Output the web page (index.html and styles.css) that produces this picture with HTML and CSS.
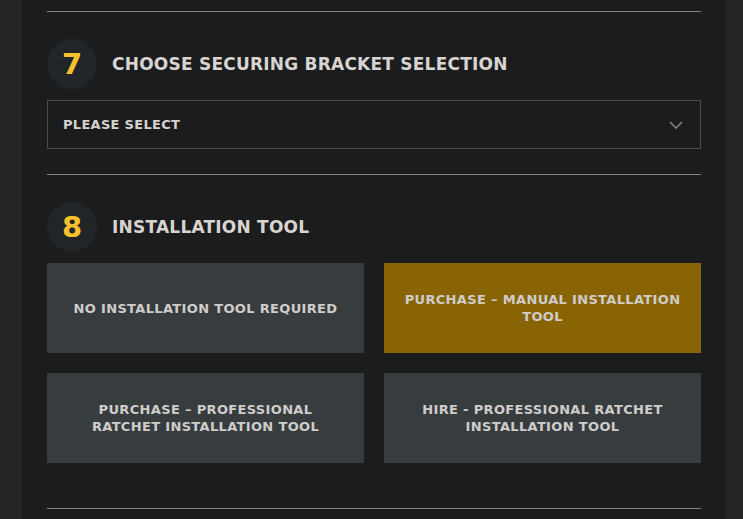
FILE: index.html
```html
<!DOCTYPE html>
<html lang="en">
<head>
<meta charset="utf-8">
<title>Configurator</title>
<link rel="stylesheet" href="styles.css">
</head>
<body>
<div class="page">
  <div class="panel">
    <div class="rule"></div>
    <section class="step">
      <div class="step-head">
        <span class="step-num">7</span>
        <h2 class="step-title">CHOOSE SECURING BRACKET SELECTION</h2>
      </div>
      <div class="select">
        <span class="select-label">PLEASE SELECT</span>
        <svg class="chevron" width="14" height="8" viewBox="0 0 14 8"><path d="M1 1 L7 7 L13 1" fill="none" stroke="#8d8273" stroke-width="1.6"/></svg>
      </div>
    </section>
    <div class="rule"></div>
    <section class="step step-last">
      <div class="step-head">
        <span class="step-num">8</span>
        <h2 class="step-title">INSTALLATION TOOL</h2>
      </div>
      <div class="options">
        <div class="option">NO INSTALLATION TOOL REQUIRED</div>
        <div class="option option-active">PURCHASE – MANUAL INSTALLATION TOOL</div>
        <div class="option">PURCHASE – PROFESSIONAL RATCHET INSTALLATION TOOL</div>
        <div class="option">HIRE - PROFESSIONAL RATCHET INSTALLATION TOOL</div>
      </div>
    </section>
    <div class="rule"></div>
  </div>
</div>
</body>
</html>
```
FILE: styles.css
```css
html, body {
  margin: 0;
  padding: 0;
  background: #222426;
  height: 100%;
  overflow: hidden;
}
.page {
  padding: 0 17px 0 22px;
  height: 100%;
}
.panel {
  background: #1b1c1e;
  padding: 11px 25px 0;
  height: 100%;
  box-sizing: border-box;
  font-family: "DejaVu Sans", sans-serif;
  font-weight: 700;
}
.rule {
  height: 1px;
  background: #8a7f70;
}
.step {
  padding: 27px 0 25px;
}
.step-last {
  padding-bottom: 45px;
}
.step-head {
  display: flex;
  align-items: center;
  gap: 15px;
  margin-bottom: 11px;
}
.step-num {
  width: 50px;
  height: 50px;
  border-radius: 50%;
  background: #222527;
  color: #f6c12c;
  display: flex;
  align-items: center;
  justify-content: center;
  font-size: 29px;
  font-weight: 800;
}
.step-title {
  margin: 0;
  font-size: 17px;
  font-weight: 700;
  color: #d8d4cf;
  letter-spacing: 0.22px;
}
.select {
  height: 49px;
  box-sizing: border-box;
  border: 1px solid #4a4d50;
  display: flex;
  align-items: center;
  justify-content: space-between;
  padding: 0 17px 0 15px;
}
.select-label {
  font-size: 13px;
  color: #d6d3ce;
  letter-spacing: 0.3px;
}
.options {
  display: grid;
  grid-template-columns: 1fr 1fr;
  gap: 20px;
}
.option {
  height: 90px;
  background: #373c3f;
  color: #cfcdca;
  font-size: 13px;
  line-height: 17px;
  letter-spacing: 0.34px;
  display: flex;
  align-items: center;
  justify-content: center;
  text-align: center;
  padding: 0 18px;
}
.option-active {
  background: #886404;
}
```
